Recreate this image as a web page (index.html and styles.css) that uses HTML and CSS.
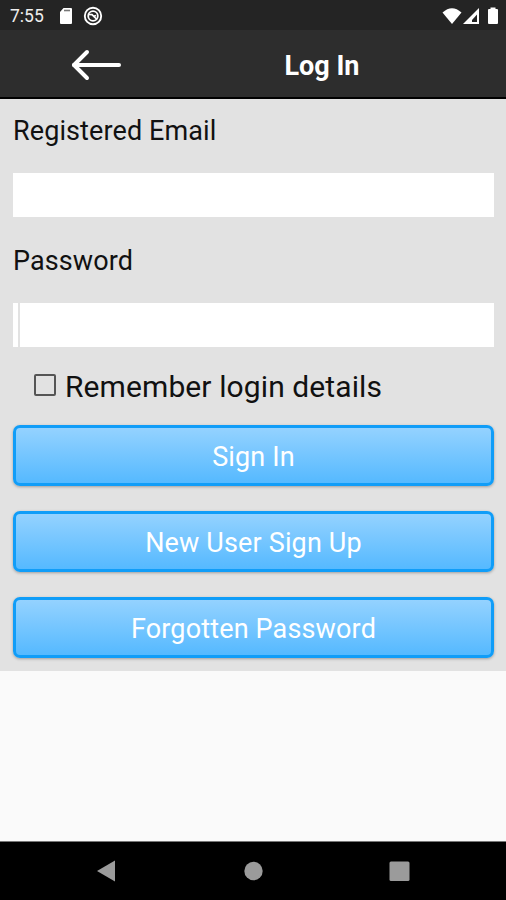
FILE: index.html
```html
<!DOCTYPE html>
<html lang="en">

<head>
    <meta charset="utf-8">
    <title>Log In</title>
    <meta name="viewport" content="width=device-width,initial-scale=1">
    <link rel="stylesheet" href="styles.css">
</head>

<body>
    <div class="statusbar">
        <span class="clock">7:55</span>
        <svg class="sdcard" width="14" height="18" viewBox="0 0 14 18">
            <path d="M4.5 1H12a1 1 0 0 1 1 1v14a1 1 0 0 1-1 1H2a1 1 0 0 1-1-1V5z" fill="#fff" />
            <path d="M5 3.5h6" stroke="#777" stroke-width="1.6" />
        </svg>
        <svg class="sync" width="20" height="20" viewBox="0 0 20 20" fill="none" stroke="#fff">
            <circle cx="10" cy="10" r="8.2" stroke-width="1.9" />
            <circle cx="10" cy="10" r="4.8" stroke-width="1.8" />
            <path d="M5.5 8.5l3.500 .2 5 4.800M10 10.500l3-1" stroke-width="1.7" />
        </svg>
        <svg class="signals" width="58" height="20" viewBox="0 0 58 20">
            <path d="M1.500 6.5Q11 -2 20.500 6.500L11 18z" fill="#fff" />
            <path d="M38 2v16H22z" fill="#fff" />
            <path d="M36 8.500v7.500h-5v-2z" fill="#242424" />
            <path d="M49.500 1.500h5v1.500h1.500a1 1 0 0 1 1 1v13a1 1 0 0 1-1 1H48a1 1 0 0 1-1-1V4a1 1 0 0 1 1-1h1.500z" fill="#fff" />
        </svg>
    </div>

    <header class="titlebar">
        <a class="back" href="#" aria-label="Back">
            <svg width="52" height="34" viewBox="0 0 52 34" fill="none" stroke="#fff" stroke-width="4"
                stroke-linecap="round" stroke-linejoin="round">
                <path d="M17 4L4 17l13 13" />
                <path d="M4 17h45" />
            </svg>
        </a>
        <h1>Log In</h1>
    </header>

    <form class="login">
        <label for="email">Registered Email</label>
        <input class="field" id="email" type="text">
        <label for="password">Password</label>
        <input class="field" id="password" type="password">
        <label class="remember">
            <input type="checkbox">
            <span>Remember login details</span>
        </label>
        <button type="button">Sign In</button>
        <button type="button">New User Sign Up</button>
        <button type="button">Forgotten Password</button>
    </form>

    <nav class="navbar">
        <svg width="506" height="58" viewBox="0 0 506 58" fill="#9b9b9b">
            <path d="M97 29l18-10.500v21z" />
            <circle cx="253.500" cy="29" r="9.200" />
            <rect x="389.500" y="19.500" width="20" height="19.500" rx="1.500" />
        </svg>
    </nav>
</body>

</html>
```
FILE: styles.css
```css
* {
    box-sizing: border-box;
}

body {
    margin: 0;
    height: 900px;
    display: flex;
    flex-direction: column;
    font-family: Roboto, sans-serif;
    background-color: #fafafa;
    overflow: hidden;
}

.statusbar {
    height: 30px;
    display: flex;
    align-items: center;
    padding: 1px 7px 0 10px;
    background-color: #242424;
    color: #eee;
}

.clock {
    width: 49px;
    font-size: 17.5px;
}

.sync {
    margin-left: 10px;
}

.signals {
    margin-left: auto;
}

/* Title is centred in the space right of the back arrow */
.titlebar {
    height: 69px;
    display: grid;
    grid-template-columns: 138px 1fr;
    align-items: center;
    background-color: #2d2d2d;
    border-bottom: 2px solid #000;
}

.back {
    display: flex;
    padding: 2px 0 0 70px;
}

.titlebar h1 {
    margin: 5px 0 0;
    font-size: 27px;
    font-weight: 700;
    line-height: 32px;
    text-align: center;
    color: #fff;
}

.login {
    display: flex;
    flex-direction: column;
    height: 572px;
    padding: 16px 12px 0 13px;
    background-color: #e2e2e2;
    color: #111;
}

.login > * {
    flex-shrink: 0;
}

.login label {
    height: 32px;
    font-size: 27px;
    line-height: 32px;
    letter-spacing: 0.1px;
}

.field {
    width: 100%;
    height: 44px;
    margin: 26px 0 28px;
    padding: 0 8px;
    border: 0;
    border-radius: 0;
    background-color: #fff;
    font: 26px Roboto, sans-serif;
    outline: none;
}

/* The faint caret line at the start of the field */
#password {
    background-image: linear-gradient(#e2e2e2, #e2e2e2);
    background-position: 5px 0;
    background-size: 2px 100%;
    background-repeat: no-repeat;
}

.login .remember {
    display: flex;
    align-items: center;
    gap: 9px;
    height: 38px;
    margin: -7px 0 19px;
    padding-left: 21px;
    font-size: 30px;
    line-height: 38px;
}

.remember input {
    appearance: none;
    width: 22px;
    height: 22px;
    margin: 0 0 4px;
    border: 2px solid #555;
    border-radius: 2px;
}

.login button {
    height: 61px;
    margin-bottom: 25px;
    padding: 2px 0 0;
    border: 3px solid #109df8;
    border-radius: 7px;
    background: linear-gradient(#94d2ff, #55b9ff);
    box-shadow: 0 1px 3px rgba(0, 0, 0, 0.3);
    font: 27px Roboto, sans-serif;
    letter-spacing: 0.15px;
    color: #fff;
}

.navbar {
    height: 59px;
    margin-top: auto;
    border-top: 1px solid #777;
    background-color: #000;
}

.navbar svg {
    display: block;
}
```
